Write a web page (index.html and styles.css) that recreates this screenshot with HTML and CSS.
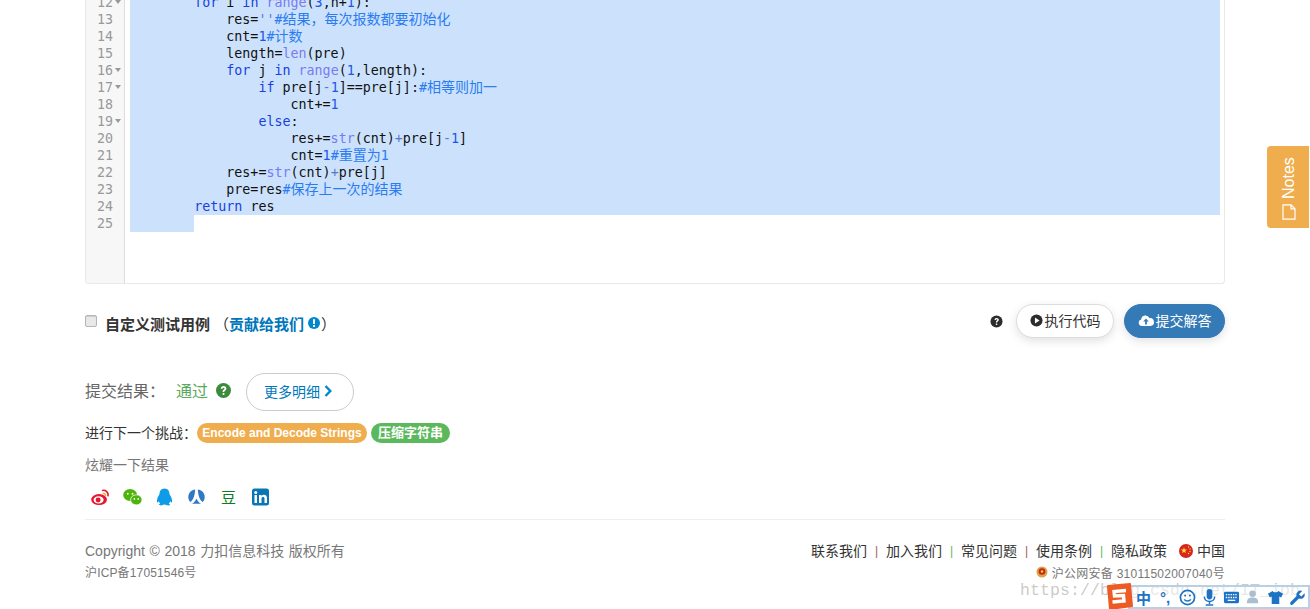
FILE: index.html
```html
<!DOCTYPE html>
<html lang="zh">
<head>
<meta charset="utf-8">
<title>提交结果</title>
<link rel="stylesheet" href="styles.css">
</head>
<body>
<main class="page">
  <section class="editor">
    <div class="gutter">
      <div class="num">12<i></i></div><div class="num">13</div><div class="num">14</div><div class="num">15</div>
      <div class="num">16<i></i></div><div class="num">17<i></i></div><div class="num">18</div><div class="num">19<i></i></div>
      <div class="num">20</div><div class="num">21</div><div class="num">22</div><div class="num">23</div><div class="num">24</div><div class="num">25</div>
    </div>
    <div class="code">
<pre class="line">        <b>for</b> i <b>in</b> <u>range</u>(<s>3</s>,n+<s>1</s>):</pre>
<pre class="line">            res=<em>''</em><q>#<span>结果，每次报数都要初始化</span></q></pre>
<pre class="line">            cnt=<s>1</s><q>#<span>计数</span></q></pre>
<pre class="line">            length=<u>len</u>(pre)</pre>
<pre class="line">            <b>for</b> j <b>in</b> <u>range</u>(<s>1</s>,length):</pre>
<pre class="line">                <b>if</b> pre[j<em>-</em><s>1</s>]==pre[j]:<q>#<span>相等则加一</span></q></pre>
<pre class="line">                    cnt+=<s>1</s></pre>
<pre class="line">                <b>else</b>:</pre>
<pre class="line">                    res+=<u>str</u>(cnt)<em>+</em>pre[j<em>-</em><s>1</s>]</pre>
<pre class="line">                    cnt=<s>1</s><q>#<span>重置为</span>1</q></pre>
<pre class="line">            res+=<u>str</u>(cnt)<em>+</em>pre[j]</pre>
<pre class="line">            pre=res<q>#<span>保存上一次的结果</span></q></pre>
<pre class="line">        <b>return</b> res</pre>
<pre class="line last"> </pre>
    </div>
  </section>

  <section class="actions">
    <label class="custom">
      <input type="checkbox" class="check">
      <strong>自定义测试用例</strong>
      <span class="contrib">（<a>贡献给我们</a><svg class="ico14" viewBox="0 0 14 14"><circle cx="7" cy="7" r="6" fill="#0088cc"/><rect x="6" y="3.2" width="2" height="4.8" fill="#fff"/><rect x="6" y="9" width="2" height="2" fill="#fff"/></svg>）</span>
    </label>
    <div class="run-group">
      <svg class="ico13" viewBox="0 0 14 14"><circle cx="7" cy="7" r="6.5" fill="#2c2c2c"/><path d="M4.8 5.4c.2-1.5 1.2-2.2 2.4-2.2 1.300 0 2.300.8 2.300 2 0 1.700-1.800 1.500-1.800 3H6.300c0-2.200 1.600-2 1.600-3 0-.4-.3-.7-.8-.7-.5 0-.8.4-.9 1z" fill="#fff"/><rect x="6.300" y="9.200" width="1.500" height="1.600" fill="#fff"/></svg>
      <button class="btn btn-run"><svg class="ico13" viewBox="0 0 14 14"><circle cx="7" cy="7" r="6.500" fill="#2c2c2c"/><path d="M5.300 3.700v6.600L10.300 7z" fill="#fff"/></svg>执行代码</button>
      <button class="btn btn-submit"><svg class="ico-cloud" viewBox="0 0 16 13"><path d="M4 12a3.300 3.300 0 0 1-.8-6.500A4.300 4.300 0 0 1 11.400 4 4 4 0 0 1 12.500 12z" fill="#fff"/><path d="M8 4.500 5.200 7.500h1.900V10.500h1.800V7.500h1.900z" fill="#337ab7"/></svg>提交解答</button>
    </div>
  </section>

  <section class="result">
    <span class="r-label">提交结果：</span>
    <span class="r-pass">通过</span>
    <svg class="ico15" viewBox="0 0 14 14"><circle cx="7" cy="7" r="7" fill="#3c8b3c"/><path d="M4.400 5.300c.2-1.600 1.300-2.400 2.700-2.400 1.500 0 2.600.9 2.600 2.200 0 1.900-2 1.700-2 3.200H6.200c0-2.400 1.700-2.200 1.700-3.200 0-.4-.3-.7-.8-.7-.6 0-.9.4-1 1z" fill="#fff"/><rect x="6.200" y="9.300" width="1.600" height="1.800" fill="#fff"/></svg>
    <button class="btn-more">更多明细<svg class="chev" viewBox="0 0 8 12"><path d="M1.500 1 6.300 6 1.500 11" fill="none" stroke="#0088cc" stroke-width="2.400"/></svg></button>
  </section>

  <section class="next">
    <span>进行下一个挑战：</span>
    <a class="tag tag-orange">Encode and Decode Strings</a>
    <a class="tag tag-green">压缩字符串</a>
  </section>

  <p class="share-title">炫耀一下结果</p>

  <section class="share">
    <svg class="soc" viewBox="0 0 20 18"><ellipse cx="8.500" cy="11.700" rx="8.300" ry="5.800" fill="#e6162d"/><ellipse cx="8" cy="12" rx="5.300" ry="3.800" fill="#fff"/><circle cx="7.500" cy="12.200" r="2.600" fill="#e6162d"/><path d="M11.500 2.300c3.800-1.200 7.500 1.800 6.300 6" fill="none" stroke="#e6162d" stroke-width="1.600"/><path d="M12.300 5.300c1.900-.5 3.300 1 2.800 2.700" fill="none" stroke="#f5a623" stroke-width="1.400"/></svg>
    <svg class="soc" viewBox="0 0 20 18"><ellipse cx="7.500" cy="7" rx="7.300" ry="6.300" fill="#4cb40a"/><ellipse cx="14" cy="12" rx="6" ry="5.300" fill="#4cb40a" stroke="#fff" stroke-width=".8"/><circle cx="5" cy="5.500" r="1" fill="#fff"/><circle cx="10" cy="5.500" r="1" fill="#fff"/><circle cx="12" cy="11" r=".9" fill="#fff"/><circle cx="16" cy="11" r=".9" fill="#fff"/></svg>
    <svg class="soc" viewBox="0 0 20 18"><path d="M10 0c3.800 0 5.300 3 5.300 6.200.9 1.400 2.700 4 2.700 7.300 0 1-.5 1.500-1.100.9l-.9-1c-.2 1 -.7 1.900-1.500 2.600 1 .3 1.500.8 1.500 1.200 0 .5-2 .8-3.500.5-1-.2-1.700-.7-2.500-.7s-1.500.5-2.500.7c-1.500.3-3.500 0-3.500-.5 0-.4.500-.9 1.500-1.200-.8-.7-1.300-1.600-1.500-2.600l-.9 1c-.6.6-1.100.1-1.100-.9 0-3.300 1.800-5.900 2.700-7.300C4.700 3 6.200 0 10 0z" fill="#0e9ce8"/></svg>
    <svg class="soc" viewBox="0 0 20 18"><path d="M8.600 1A8 8 0 0 0 3.400 14.300C6.500 12 8.200 8 8.600 1zM11.400 1A8 8 0 0 1 16.600 14.300C13.500 12 11.800 8 11.400 1zM10 10.500c1 2.600 3 4.800 4.800 5.500H5.200C7 15.300 9 13.100 10 10.500z" fill="#2f78c4"/></svg>
    <span class="douban">豆</span>
    <svg class="soc" viewBox="0 0 18 18"><rect width="17" height="17" x=".5" y=".5" rx="2.500" fill="#0a77b5"/><rect x="3" y="7" width="2.500" height="8" fill="#fff"/><circle cx="4.250" cy="4.500" r="1.500" fill="#fff"/><path d="M7.500 7H10v1.200C10.600 7.300 11.500 6.800 12.500 6.800c2 0 3 1.300 3 3.500V15H13v-4.200c0-1.100-.5-1.700-1.400-1.700S10 9.700 10 10.800V15H7.500z" fill="#fff"/></svg>
  </section>

  <footer class="footer">
    <div class="foot-left">
      <div class="copy">Copyright © 2018 力扣信息科技 版权所有</div>
      <div class="icp">沪ICP备17051546号</div>
    </div>
    <div class="foot-right">
      <nav class="links">
        <a>联系我们</a><i class="sep red">|</i><a>加入我们</a><i class="sep green">|</i><a>常见问题</a><i class="sep red">|</i><a>使用条例</a><i class="sep green">|</i><a>隐私政策</a>
        <svg class="flag" viewBox="0 0 14 14"><circle cx="7" cy="7" r="7" fill="#d7261e"/><path d="M5 3.300l.8 2.100 2.200.1-1.700 1.400.6 2.100L5 7.900 3.100 9.100l.6-2.100L2 5.500l2.200-.1z" fill="#ffd83a"/><circle cx="9.500" cy="3" r=".7" fill="#ffd83a"/><circle cx="11" cy="5" r=".7" fill="#ffd83a"/><circle cx="11" cy="7.500" r=".7" fill="#ffd83a"/><circle cx="9.500" cy="9.500" r=".7" fill="#ffd83a"/></svg>
        <a class="cn">中国</a>
      </nav>
      <div class="beian"><svg class="badge" viewBox="0 0 12 12"><circle cx="6" cy="6" r="5.500" fill="#d9a441"/><circle cx="6" cy="5.500" r="3.300" fill="#c8261c"/><circle cx="6" cy="5.500" r="1.200" fill="#f3d25a"/></svg>沪公网安备 31011502007040号</div>
    </div>
  </footer>
</main>

<aside class="notes"><svg class="note-ico" viewBox="0 0 14 16"><path d="M1 .8h8l4 4v10.400H1zM9 .8v4h4" fill="none" stroke="#fff" stroke-width="1.200"/></svg><span>Notes</span></aside>

<div class="watermark">https://blog.csdn.net/IT_job</div>

<aside class="ime">
  <svg class="ime-logo" viewBox="0 0 28 27"><path d="M3 3 25 1 27 23 5 26z" fill="#ee5a24" stroke="#ee5a24" stroke-width="2" stroke-linejoin="round"/><path d="M21 7.500 9 8.500 9.500 13 18.500 12.500 19 18 7.500 19" fill="none" stroke="#fff" stroke-width="3.400"/></svg>
  <span class="ime-zh">中</span>
  <span class="ime-punc">°,</span>
  <svg class="ime-i" viewBox="0 0 18 18"><circle cx="9" cy="9" r="7.500" fill="none" stroke="#1c73c4" stroke-width="1.800"/><circle cx="6.500" cy="7" r="1.100" fill="#1c73c4"/><circle cx="11.500" cy="7" r="1.100" fill="#1c73c4"/><path d="M5.500 11c1.500 2.200 5.500 2.200 7 0" fill="none" stroke="#1c73c4" stroke-width="1.500"/></svg>
  <svg class="ime-i" viewBox="0 0 18 18"><rect x="6" y="0" width="6" height="11" rx="3" fill="#1c73c4"/><path d="M3.500 8c0 7 11 7 11 0M9 13v3M5 17h8" fill="none" stroke="#1c73c4" stroke-width="1.600"/></svg>
  <svg class="ime-i" viewBox="0 0 18 18"><rect x="1" y="3" width="16" height="12" rx="1.500" fill="#1c73c4"/><path d="M3 6h12M3 9h12" stroke="#fff" stroke-dasharray="1.500 1" stroke-width="1.400"/><path d="M5 12h8" stroke="#fff" stroke-width="1.400"/></svg>
  <svg class="ime-i" viewBox="0 0 18 18"><circle cx="8" cy="5" r="3.500" fill="#a9bfd0"/><path d="M2 15c0-5 2.500-6 6-6s6 1 6 6z" fill="#a9bfd0"/></svg>
  <svg class="ime-i" viewBox="0 0 18 18"><path d="M6 2 1 5l2 4 2-1v8h8V8l2 1 2-4-5-3c-.5 2-5.500 2-6 0z" fill="#1c73c4"/></svg>
  <svg class="ime-i" viewBox="0 0 18 18"><path d="M16.500 4.500 13 8 10.500 5.500 14 2a4.500 4.500 0 0 0-6 5.500L1.500 14a1.800 1.800 0 0 0 2.500 2.500L10.500 10a4.500 4.500 0 0 0 6-5.500z" fill="#1c73c4"/></svg>
</aside>
</body>
</html>
```

FILE: styles.css
```css
* { box-sizing: border-box; }
html, body { margin: 0; height: 609px; overflow: hidden; background: #fff; }
body {
  font-family: "Liberation Sans", "Noto Sans CJK SC", sans-serif;
  font-size: 14px;
  color: #333;
  position: relative;
}
.page { width: 1140px; margin: 0 0 0 85px; }

/* editor */
.editor {
  display: flex;
  height: 290px;
  margin-top: -6px;
  border: 1px solid #e8e8e8;
  border-top: 0;
  border-radius: 0 0 4px 4px;
  overflow: hidden;
}
.gutter { width: 39px; flex: none; background: #f7f7f7; border-right: 1px solid #ddd; color: #999; }
.num {
  height: 17px;
  line-height: 17px;
  padding-left: 11px;
  font-family: "DejaVu Sans Mono", monospace;
  font-size: 13.3px;
  position: relative;
}
.num i {
  position: absolute;
  left: 29px;
  top: 6px;
  border: 3px solid transparent;
  border-top: 4px solid #999;
  border-bottom: 0;
}
.code { flex: 1; padding: 0 4px 0 5px; min-width: 0; }
.line {
  margin: 0;
  height: 17px;
  line-height: 17px;
  background: #cce2fc;
  font-family: "DejaVu Sans Mono", monospace;
  font-size: 13.33px;
  color: #111;
  white-space: pre;
  overflow: hidden;
}
.line.last { width: 64px; }
.line b { font-weight: 400; color: #1a3fe0; }
.line u { text-decoration: none; color: #7a7af0; }
.line s { text-decoration: none; color: #1f55e8; }
.line em { font-style: normal; color: #5a78c8; }
.line q { quotes: none; color: #2b7cf0; }
.line q span { font-family: "Noto Sans CJK SC", sans-serif; font-size: 14px; line-height: 0; }

/* actions */
.actions { display: flex; justify-content: space-between; align-items: flex-start; margin-top: 20px; height: 34px; }
.custom { display: flex; align-items: center; margin-top: 9px; height: 20px; }
.check {
  appearance: none;
  width: 12px;
  height: 12px;
  margin: 0 8px 5px 0;
  border: 1px solid #b5b5b5;
  border-radius: 2px;
  background: #e9e9e9;
  box-shadow: inset 0 1px 1px rgba(0, 0, 0, .12);
}
.custom strong { font-size: 15px; color: #333; }
.contrib { margin-left: 4px; color: #333; display: flex; align-items: center; font-size: 15px; }
.contrib a { color: #0077bb; font-weight: 700; }
.ico14 { width: 14px; height: 14px; margin: 0 0 0 3px; }
.ico13 { width: 13px; height: 13px; flex: none; }
.ico15 { width: 15px; height: 15px; flex: none; }
.run-group { display: flex; align-items: center; }
.btn {
  height: 34px;
  border-radius: 17px;
  font-family: inherit;
  font-size: 14px;
  display: flex;
  align-items: center;
  justify-content: center;
  padding: 0 0 2px;
  box-shadow: 0 3px 10px rgba(0, 0, 0, .12);
}
.btn-run { width: 98px; margin-left: 13px; background: #fff; border: 1px solid #ddd; color: #333; }
.btn-run .ico13 { margin-right: 2px; }
.btn-submit { width: 101px; margin-left: 10px; background: #337ab7; border: 1px solid #337ab7; color: #fff; }
.ico-cloud { width: 16px; height: 13px; margin-right: 2px; }

/* result */
.result { display: flex; align-items: center; height: 38px; margin-top: 35px; font-size: 16px; }
.r-label { color: #666; width: 91px; margin-bottom: 4px; }
.r-pass { color: #5ca85c; width: 40px; margin-bottom: 4px; }
.result .ico15 { margin-bottom: 4px; }
.btn-more {
  width: 108px;
  height: 38px;
  margin-left: 15px;
  border: 1px solid #ccc;
  border-radius: 19px;
  background: #fff;
  color: #0077bb;
  font-family: inherit;
  font-size: 14px;
  display: flex;
  align-items: center;
  justify-content: center;
  padding: 0 4px 2px 0;
}
.chev { width: 8px; height: 12px; margin-left: 4px; }
.next { display: flex; align-items: center; margin-top: 12px; height: 20px; color: #333; }
.next > span { width: 112px; margin-bottom: 3px; }
.tag {
  height: 20px;
  line-height: 20px;
  border-radius: 10px;
  color: #fff;
  font-size: 12px;
  font-weight: 700;
  text-align: center;
}
.tag-orange { width: 170px; background: #f0ad4e; }
.tag-green { width: 79px; margin-left: 4px; background: #5cb85c; font-size: 13px; }
.share-title { margin: 12px 0 0; height: 20px; line-height: 20px; color: #777; }
.share { display: flex; align-items: center; height: 20px; margin-top: 12px; padding-left: 6px; gap: 13px; }
.soc { width: 19px; height: 18px; flex: none; }
.douban { width: 19px; text-align: center; color: #0a7d1e; font-size: 15px; line-height: 17px; }

/* footer */
.footer {
  display: flex;
  justify-content: space-between;
  margin-top: 12px;
  padding-top: 21px;
  border-top: 1px solid #eee;
}
.copy { color: #777; height: 20px; line-height: 20px; word-spacing: .7px; }
.icp { color: #777; font-size: 12px; height: 20px; line-height: 20px; margin-top: 2px; letter-spacing: .15px; }
.foot-right { display: flex; flex-direction: column; align-items: flex-end; }
.links { display: flex; align-items: center; height: 20px; color: #333; margin-bottom: 2px; }
.links a { position: relative; top: -1px; }
.sep { font-style: normal; width: 19px; text-align: center; font-size: 12px; }
.sep.red { color: #a05a5a; }
.sep.green { color: #5cb85c; }
.flag { width: 14px; height: 14px; margin: 0 4px 0 12px; }
.beian { display: flex; align-items: center; color: #777; font-size: 12px; height: 20px; margin-top: -1px; letter-spacing: .25px; }
.badge { width: 12px; height: 12px; margin-right: 4px; }

/* overlays */
.notes {
  position: absolute;
  left: 1267px;
  top: 146px;
  width: 42px;
  height: 82px;
  padding: 0 2px 4px 0;
  background: #f0ad4e;
  color: #fff;
  font-size: 16px;
  writing-mode: vertical-rl;
  transform: rotate(180deg);
  display: flex;
  align-items: center;
  justify-content: center;
  gap: 5px;
  border-radius: 0 4px 4px 0;
}
.note-ico { width: 14px; height: 16px; transform: rotate(180deg); }
.watermark {
  position: absolute;
  left: 1020px;
  top: 581px;
  font-family: "Liberation Mono", monospace;
  font-size: 16.5px;
  letter-spacing: .1px;
  color: rgba(120, 120, 110, .4);
  white-space: nowrap;
}
.ime {
  position: absolute;
  left: 1128px;
  top: 585px;
  width: 182px;
  height: 24px;
  border: 2px solid #b9cfe2;
  background: rgba(255, 255, 255, .55);
  display: flex;
  align-items: center;
  padding-left: 6px;
}
.ime-logo {
  position: absolute;
  left: -25px;
  top: -4px;
  width: 28px;
  height: 27px;
}
.ime-zh { color: #1c73c4; font-weight: 700; font-size: 15px; width: 20px; }
.ime-punc { color: #1c73c4; font-weight: 700; font-size: 15px; width: 18px; text-align: center; }
.ime-i { width: 17px; height: 17px; margin-left: 5px; flex: none; }
```
